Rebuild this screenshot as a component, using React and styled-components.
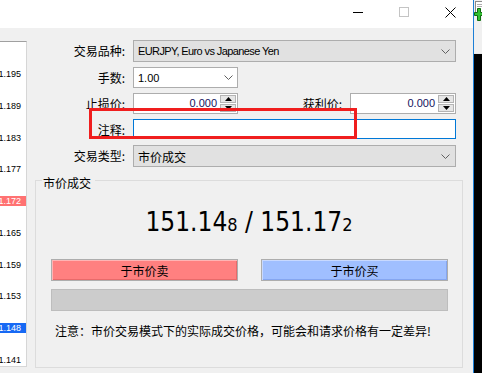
import React from "react";
import styled, { createGlobalStyle } from "styled-components";

const CJK = `"Noto Sans CJK SC", "Liberation Sans", sans-serif`;
const LATIN = `"Liberation Sans", "Noto Sans CJK SC", sans-serif`;
const NARROW = `"DejaVu Sans", "Liberation Sans", sans-serif`;

const GlobalStyle = createGlobalStyle`
  html, body {
    margin: 0;
    padding: 0;
  }
  body {
    width: 482px;
    height: 373px;
    overflow: hidden;
    background: #f0f0f0;
    font-family: ${CJK};
    font-size: 12px;
    color: #000;
  }
`;

const Screen = styled.div`
  position: relative;
  display: flex;
  width: 482px;
  height: 373px;
`;

const Window = styled.div`
  width: 474px;
  box-sizing: border-box;
  border-right: 1px solid #1c7fd6;
  display: flex;
  flex-direction: column;
  background: #f0f0f0;
`;

const TitleBar = styled.div`
  height: 28px;
  flex: none;
  background: #fff;
  display: flex;
  justify-content: flex-end;
`;

const CaptionButton = styled.div`
  width: 46px;
  display: flex;
  justify-content: center;
  align-items: flex-start;
  padding-top: 7px;
  box-sizing: border-box;
`;

const Body = styled.div`
  flex: 1;
  display: flex;
  min-height: 0;
`;

const PriceScale = styled.div`
  position: relative;
  flex: none;
  width: 27px;
  height: 326px;
  margin-top: 13px;
  box-sizing: border-box;
  padding-top: 17px;
  background: #fff;
  border-top: 1px solid #a0a0a0;
  border-right: 1px solid #d6d6d6;
  border-bottom: 1px solid #d6d6d6;
  overflow: hidden;
`;

const Tick = styled.div`
  height: 31.78px;
  display: flex;
  justify-content: flex-end;
  padding-right: 5px;
  font: 9px/31.78px ${LATIN};
  white-space: nowrap;
`;

const PriceBadge = styled.div`
  position: absolute;
  left: 0;
  right: 0;
  height: 10px;
  display: flex;
  justify-content: flex-end;
  padding-right: 5px;
  font: 9px/10px ${LATIN};
  white-space: nowrap;
  color: #fff;
  background: ${(p) => (p.$side === "ask" ? "#ff7272" : "#1769f4")};
`;

const Dialog = styled.div`
  flex: 1;
  display: flex;
  flex-direction: column;
  padding: 12px 10px 5px 8px;
  min-width: 0;
`;

const FormGrid = styled.div`
  display: grid;
  grid-template-columns: 90px 323px;
  grid-template-rows: 22px 21px 21px 21px 22px;
  column-gap: 8px;
  row-gap: 5px;
`;

const Label = styled.div`
  align-self: center;
  text-align: right;
  white-space: nowrap;
  font: 12px/16px ${CJK};
`;

const Combo = styled.div`
  display: flex;
  align-items: center;
  box-sizing: border-box;
  width: ${(p) => p.$width || "100%"};
  height: ${(p) => (p.$editable ? "21px" : "22px")};
  padding: 0 ${(p) => (p.$editable ? "4px" : "5px")} 0 4px;
  background: ${(p) => (p.$editable ? "#fff" : "#e1e1e1")};
  border: 1px solid #adadad;
`;

const ComboText = styled.span`
  flex: 1;
  font: ${(p) => (p.$cjk ? `12px ${CJK}` : `11px ${LATIN}`)};
  letter-spacing: ${(p) => (p.$tight ? "-0.6px" : "0")};
  white-space: nowrap;
  overflow: hidden;
`;

const FieldRow = styled.div`
  display: flex;
  align-items: stretch;
`;

const NumberField = styled.div`
  display: flex;
  box-sizing: border-box;
  width: ${(p) => p.$width};
  height: 21px;
  background: #fff;
  border: 1px solid #adadad;
`;

const NumberValue = styled.span`
  flex: 1;
  text-align: right;
  padding-right: 3px;
  font: 11px/19px ${LATIN};
  color: #14145e;
`;

const Spinner = styled.div`
  width: 16px;
  display: flex;
  flex-direction: column;
  gap: 1px;
  padding: 1px 1px 1px 0;
`;

const SpinButton = styled.div`
  flex: 1;
  display: flex;
  align-items: center;
  justify-content: center;
  background: #e6e6e6;
  border: 1px solid #b4b4b4;
`;

const InlineLabel = styled(Label)`
  flex: 1;
  margin-right: 8px;
`;

const TextInput = styled.div`
  box-sizing: border-box;
  height: 20px;
  background: #fff;
  border: 1px solid #0078d7;
`;

const GroupBox = styled.fieldset`
  flex: 1;
  display: flex;
  flex-direction: column;
  margin: 3px 0 0;
  padding: 0;
  min-width: 0;
  border: 1px solid #dcdcdc;
`;

const Legend = styled.legend`
  margin-left: 6px;
  padding: 6px 4px 0 1px;
  font: 12px/14px ${CJK};
`;

const Quote = styled.div`
  margin-top: 17px;
  text-align: center;
  font: 26px/30px ${NARROW};
  font-stretch: condensed;
  white-space: nowrap;
`;

const QuoteTail = styled.span`
  font-size: 18px;
`;

const ActionRow = styled.div`
  display: grid;
  grid-template-columns: 187px 187px;
  column-gap: 23px;
  margin: 19px 14px 0 15px;
`;

const TradeButton = styled.div`
  height: 22px;
  box-sizing: border-box;
  border: 1px solid #adadad;
  display: flex;
  align-items: center;
  justify-content: center;
  font: 12px ${CJK};
  background: ${(p) => (p.$side === "sell" ? "#ff8080" : "#a0bfff")};
  box-shadow: inset 1px 1px
      ${(p) => (p.$side === "sell" ? "#ffb4b4" : "#c8d9ff")},
    inset -1px -1px ${(p) => (p.$side === "sell" ? "#e86a6a" : "#85a6f0")};
`;

const StatusBar = styled.div`
  height: 22px;
  box-sizing: border-box;
  margin: 8px 14px 0 15px;
  background: #cccccc;
  border: 1px solid #bdbdbd;
`;

const Note = styled.div`
  margin-top: 12px;
  padding-left: 19px;
  font: 12px/16px ${CJK};
  white-space: nowrap;
`;

const SideStrip = styled.div`
  flex: 1;
  display: flex;
  flex-direction: column;
  overflow: hidden;
`;

const SideTop = styled.div`
  height: 53px;
  background: #f0f0f0;
`;

const SideChart = styled.div`
  flex: 1;
  background: #000;
  border-top: 1px solid #e8e8e8;
`;

const Annotation = styled.div`
  position: absolute;
  left: 89px;
  top: 108px;
  width: 268px;
  height: 31px;
  box-sizing: border-box;
  border: 3px solid #f01e1e;
  pointer-events: none;
`;

const Chevron = () => (
  <svg width="9" height="5" viewBox="0 0 9 5">
    <polyline points="0.5,0.5 4.5,4.5 8.5,0.5" fill="none" stroke="#606060" strokeWidth="1" />
  </svg>
);

const Arrow = ({ up }) => (
  <svg width="7" height="4" viewBox="0 0 7 4">
    <polygon points={up ? "3.5,0 7,4 0,4" : "0,0 7,0 3.5,4"} fill="#000" />
  </svg>
);

const SpinField = ({ width, value }) => (
  <NumberField $width={width}>
    <NumberValue>{value}</NumberValue>
    <Spinner>
      <SpinButton>
        <Arrow up />
      </SpinButton>
      <SpinButton>
        <Arrow />
      </SpinButton>
    </Spinner>
  </NumberField>
);

const TOP_PRICE = 151.195;
const TOP_Y = 75;
const PX_PER_POINT = 31.78 / 0.006;
const SCALE_TOP = 42;
const ticks = [
  "151.195", "151.189", "151.183", "151.177", "151.171",
  "151.165", "151.159", "151.153", "151.147", "151.141",
];
const badges = [
  { price: 151.172, side: "ask" },
  { price: 151.148, side: "bid" },
];
const badgeTop = (price) => TOP_Y + (TOP_PRICE - price) * PX_PER_POINT - 1 - SCALE_TOP;

export default function App() {
  return (
    <Screen>
      <GlobalStyle />
      <Window>
        <TitleBar>
          <CaptionButton>
            <svg width="10" height="10" viewBox="0 0 10 10">
              <line x1="0" y1="5.5" x2="10" y2="5.5" stroke="#000" />
            </svg>
          </CaptionButton>
          <CaptionButton>
            <svg width="10" height="10" viewBox="0 0 10 10">
              <rect x="0.5" y="0.5" width="9" height="9" fill="none" stroke="#c4c4c4" />
            </svg>
          </CaptionButton>
          <CaptionButton>
            <svg width="11" height="11" viewBox="0 0 11 11">
              <path d="M0.5 0.5 L10.5 10.5 M10.5 0.5 L0.5 10.5" stroke="#000" strokeWidth="1" />
            </svg>
          </CaptionButton>
        </TitleBar>
        <Body>
          <PriceScale>
            {ticks.map((t) => (
              <Tick key={t}>{t}</Tick>
            ))}
            {badges.map((b) => (
              <PriceBadge key={b.price} $side={b.side} style={{ top: badgeTop(b.price) }}>
                {b.price.toFixed(3)}
              </PriceBadge>
            ))}
          </PriceScale>
          <Dialog>
            <FormGrid>
              <Label>交易品种:</Label>
              <Combo>
                <ComboText $tight>EURJPY, Euro vs Japanese Yen</ComboText>
                <Chevron />
              </Combo>

              <Label>手数:</Label>
              <Combo $editable $width="105px">
                <ComboText>1.00</ComboText>
                <Chevron />
              </Combo>

              <Label>止损价:</Label>
              <FieldRow>
                <SpinField width="105px" value="0.000" />
                <InlineLabel>获利价:</InlineLabel>
                <SpinField width="106px" value="0.000" />
              </FieldRow>

              <Label>注释:</Label>
              <TextInput />

              <Label>交易类型:</Label>
              <Combo>
                <ComboText $cjk>市价成交</ComboText>
                <Chevron />
              </Combo>
            </FormGrid>

            <GroupBox>
              <Legend>市价成交</Legend>
              <Quote>
                151.14<QuoteTail>8</QuoteTail> / 151.17<QuoteTail>2</QuoteTail>
              </Quote>
              <ActionRow>
                <TradeButton $side="sell">于市价卖</TradeButton>
                <TradeButton $side="buy">于市价买</TradeButton>
              </ActionRow>
              <StatusBar />
              <Note>注意：市价交易模式下的实际成交价格，可能会和请求价格有一定差异!</Note>
            </GroupBox>
          </Dialog>
        </Body>
      </Window>
      <SideStrip>
        <SideTop>
          <svg width="8" height="22" viewBox="0 0 8 22">
            <rect x="1.5" y="1.5" width="10" height="12" fill="#fff" stroke="#8a8a8a" />
            <line x1="3" y1="4.5" x2="8" y2="4.5" stroke="#b0b0b0" />
            <line x1="3" y1="6.5" x2="8" y2="6.5" stroke="#b0b0b0" />
            <path
              d="M3.5 8.5 H6.5 V12.5 H10 V15.5 H6.5 V20.5 H3.5 V15.5 H0.5 V12.5 H3.5 Z"
              fill="#32c232"
              stroke="#0d6b0d"
            />
          </svg>
        </SideTop>
        <SideChart />
      </SideStrip>
      <Annotation />
    </Screen>
  );
}
